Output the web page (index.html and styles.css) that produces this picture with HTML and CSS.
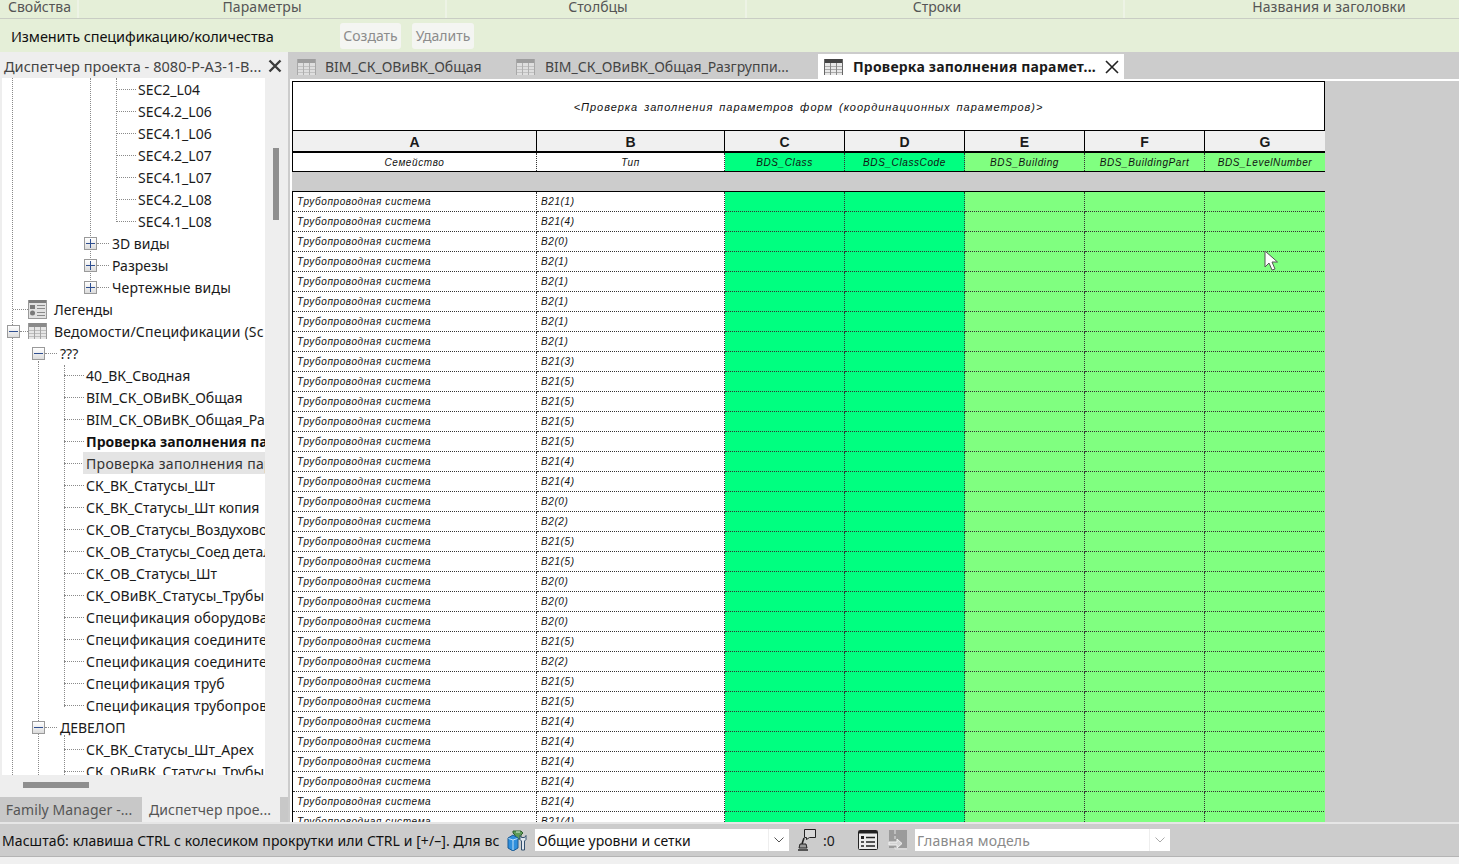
FILE: index.html
```html
<!DOCTYPE html>
<html lang="ru">
<head>
<meta charset="utf-8">
<title>Проверка заполнения параметров</title>
<link rel="stylesheet" href="styles.css">
</head>
<body>
<svg class="defs" width="0" height="0" aria-hidden="true">
  <symbol id="tbl" viewBox="0 0 19 16">
    <rect x="0" y="0" width="19" height="16" fill="#e6e6e6"/>
    <rect x="0" y="0" width="19" height="4" fill="#8a8a8a"/>
    <path d="M0 7.5h19M0 10.5h19M0 13.5h19" stroke="#bdbdbd" fill="none"/>
    <path d="M6.5 4v12M12.5 4v12" stroke="#a4a4a4" fill="none"/>
    <path d="M0.5 0v16M18.5 0v16" stroke="#9a9a9a" fill="none"/>
  </symbol>
  <symbol id="legend" viewBox="0 0 19 19">
    <rect x="0" y="0" width="19" height="19" fill="#e2e2e2"/>
    <rect x="0" y="0" width="19" height="3" fill="#7d7d7d"/>
    <path d="M0.5 0v19M18.5 0v19M0 18.5h19" stroke="#999" fill="none"/>
    <rect x="2" y="5" width="5" height="4" fill="#7a7a7a"/>
    <circle cx="4.5" cy="13" r="2.5" fill="#7a7a7a"/>
    <path d="M9 5.500h8M9 8.500h8M9 12.500h8M9 15.500h8" stroke="#8a8a8a" fill="none"/>
  </symbol>
  <symbol id="tbl-dark" viewBox="0 0 19 16">
    <rect x="0" y="0" width="19" height="16" fill="#e8e8e8"/>
    <rect x="0" y="0" width="19" height="4" fill="#444"/>
    <path d="M0 7.5h19M0 10.5h19M0 13.5h19" stroke="#aaa" fill="none"/>
    <path d="M6.5 4v12M12.5 4v12" stroke="#888" fill="none"/>
    <path d="M0.5 0v16M18.5 0v16" stroke="#666" fill="none"/>
  </symbol>
</svg>

<header class="ribbon">
  <div class="ribbon-labels">
    <div class="rl rl-1">Свойства</div>
    <div class="rl rl-2">Параметры</div>
    <div class="rl rl-3">Столбцы</div>
    <div class="rl rl-4">Строки</div>
    <div class="rl rl-5">Названия и заголовки</div>
  </div>
  <div class="context">
    <div class="context-title">Изменить спецификацию/количества</div>
    <button class="ctx-btn ctx-create">Создать</button>
    <button class="ctx-btn ctx-delete">Удалить</button>
  </div>
</header>

<main class="workspace">
  <aside class="browser">
    <div class="browser-title">
      <span class="browser-name">Диспетчер проекта - 8080-Р-А3-1-В...</span>
      <svg class="close" width="14" height="14" viewBox="0 0 14 14"><path d="M1.5 1.5l11 11M12.5 1.5l-11 11" stroke="#3b3b3b" stroke-width="2.4"/></svg>
    </div>
    <div class="browser-body">
      <div class="tree">
        <i class="guide g1"></i><i class="guide g2"></i><i class="guide g3"></i><i class="guide g5"></i><i class="guide g6"></i><i class="guide g7"></i>
        <div class="node l3"><i class="conn"></i><span>SEC2_L04</span></div>
        <div class="node l3"><i class="conn"></i><span>SEC4.2_L06</span></div>
        <div class="node l3"><i class="conn"></i><span>SEC4.1_L06</span></div>
        <div class="node l3"><i class="conn"></i><span>SEC4.2_L07</span></div>
        <div class="node l3"><i class="conn"></i><span>SEC4.1_L07</span></div>
        <div class="node l3"><i class="conn"></i><span>SEC4.2_L08</span></div>
        <div class="node l3"><i class="conn"></i><span>SEC4.1_L08</span></div>
        <div class="node l2"><b class="box plus"></b><i class="conn short"></i><span>3D виды</span></div>
        <div class="node l2"><b class="box plus"></b><i class="conn short"></i><span>Разрезы</span></div>
        <div class="node l2"><b class="box plus"></b><i class="conn short"></i><span class="wide">Чертежные виды</span></div>
        <div class="node l0"><i class="conn lead"></i><svg class="ticon" width="19" height="19"><use href="#legend"/></svg><span>Легенды</span></div>
        <div class="node l0b"><b class="box"></b><i class="conn tiny"></i><svg class="ticon" width="19" height="16"><use href="#tbl"/></svg><span class="wide">Ведомости/Спецификации (Sc</span></div>
        <div class="node l1"><b class="box"></b><i class="conn short"></i><span>???</span></div>
        <div class="node l4"><i class="conn"></i><span>40_ВК_Сводная</span></div>
        <div class="node l4"><i class="conn"></i><span>BIM_СК_ОВиВК_Общая</span></div>
        <div class="node l4"><i class="conn"></i><span>BIM_СК_ОВиВК_Общая_Разгруппировка</span></div>
        <div class="node l4"><i class="conn"></i><span class="strong">Проверка заполнения параметров форм</span></div>
        <div class="node l4"><i class="conn"></i><span class="sel">Проверка заполнения параметров</span></div>
        <div class="node l4"><i class="conn"></i><span>СК_ВК_Статусы_Шт</span></div>
        <div class="node l4"><i class="conn"></i><span>СК_ВК_Статусы_Шт копия</span></div>
        <div class="node l4"><i class="conn"></i><span>СК_ОВ_Статусы_Воздуховоды</span></div>
        <div class="node l4"><i class="conn"></i><span>СК_ОВ_Статусы_Соед детали</span></div>
        <div class="node l4"><i class="conn"></i><span>СК_ОВ_Статусы_Шт</span></div>
        <div class="node l4"><i class="conn"></i><span>СК_ОВиВК_Статусы_Трубы</span></div>
        <div class="node l4"><i class="conn"></i><span class="wide">Спецификация оборудования</span></div>
        <div class="node l4"><i class="conn"></i><span class="wide">Спецификация соединительных</span></div>
        <div class="node l4"><i class="conn"></i><span class="wide">Спецификация соединительных</span></div>
        <div class="node l4"><i class="conn"></i><span class="wide">Спецификация труб</span></div>
        <div class="node l4"><i class="conn"></i><span class="wide">Спецификация трубопроводов</span></div>
        <div class="node l1"><b class="box"></b><i class="conn short"></i><span>ДЕВЕЛОП</span></div>
        <div class="node l4"><i class="conn"></i><span>СК_ВК_Статусы_Шт_Apex</span></div>
        <div class="node l4"><i class="conn"></i><span>СК_ОВиВК_Статусы_Трубы</span></div>
      </div>
      <div class="vscroll"><div class="vthumb"></div></div>
    </div>
    <div class="hscroll"><div class="hthumb"></div></div>
    <div class="panel-tabs">
      <div class="ptab ptab-a">Family Manager -...</div>
      <div class="ptab ptab-b">Диспетчер прое...</div>
    </div>
  </aside>

  <section class="views">
    <nav class="tabs">
      <div class="tab tab-1"><svg class="dim" width="19" height="16"><use href="#tbl"/></svg><span>BIM_СК_ОВиВК_Общая</span></div>
      <div class="tab tab-2"><svg class="dim" width="19" height="16"><use href="#tbl"/></svg><span>BIM_СК_ОВиВК_Общая_Разгруппи...</span></div>
      <div class="tab tab-3"><svg width="19" height="16"><use href="#tbl-dark"/></svg><span>Проверка заполнения парамет...</span>
        <svg class="close" width="14" height="14" viewBox="0 0 14 14"><path d="M1 1l12 12M13 1L1 13" stroke="#222" stroke-width="1.6"/></svg>
      </div>
    </nav>
    <div class="sheet-wrap">
      <div class="sheet">
        <div class="s-title">&lt;Проверка заполнения параметров форм (координационных параметров)&gt;</div>
        <div class="s-row s-letters">
          <div>A</div><div>B</div><div>C</div><div>D</div><div>E</div><div>F</div><div>G</div>
        </div>
        <div class="s-row s-head">
          <div>Семейство</div><div>Тип</div><div class="c-a">BDS_Class</div><div class="c-a">BDS_ClassCode</div><div class="c-b">BDS_Building</div><div class="c-b">BDS_BuildingPart</div><div class="c-b">BDS_LevelNumber</div>
        </div>
        <div class="s-gap"></div>
        <div class="s-body">
          <div class="s-row s-data"><div>Трубопроводная система</div><div>В21(1)</div><div class="c-a"></div><div class="c-a"></div><div class="c-b"></div><div class="c-b"></div><div class="c-b"></div></div>
          <div class="s-row s-data"><div>Трубопроводная система</div><div>В21(4)</div><div class="c-a"></div><div class="c-a"></div><div class="c-b"></div><div class="c-b"></div><div class="c-b"></div></div>
          <div class="s-row s-data"><div>Трубопроводная система</div><div>В2(0)</div><div class="c-a"></div><div class="c-a"></div><div class="c-b"></div><div class="c-b"></div><div class="c-b"></div></div>
          <div class="s-row s-data"><div>Трубопроводная система</div><div>В2(1)</div><div class="c-a"></div><div class="c-a"></div><div class="c-b"></div><div class="c-b"></div><div class="c-b"></div></div>
          <div class="s-row s-data"><div>Трубопроводная система</div><div>В2(1)</div><div class="c-a"></div><div class="c-a"></div><div class="c-b"></div><div class="c-b"></div><div class="c-b"></div></div>
          <div class="s-row s-data"><div>Трубопроводная система</div><div>В2(1)</div><div class="c-a"></div><div class="c-a"></div><div class="c-b"></div><div class="c-b"></div><div class="c-b"></div></div>
          <div class="s-row s-data"><div>Трубопроводная система</div><div>В2(1)</div><div class="c-a"></div><div class="c-a"></div><div class="c-b"></div><div class="c-b"></div><div class="c-b"></div></div>
          <div class="s-row s-data"><div>Трубопроводная система</div><div>В2(1)</div><div class="c-a"></div><div class="c-a"></div><div class="c-b"></div><div class="c-b"></div><div class="c-b"></div></div>
          <div class="s-row s-data"><div>Трубопроводная система</div><div>В21(3)</div><div class="c-a"></div><div class="c-a"></div><div class="c-b"></div><div class="c-b"></div><div class="c-b"></div></div>
          <div class="s-row s-data"><div>Трубопроводная система</div><div>В21(5)</div><div class="c-a"></div><div class="c-a"></div><div class="c-b"></div><div class="c-b"></div><div class="c-b"></div></div>
          <div class="s-row s-data"><div>Трубопроводная система</div><div>В21(5)</div><div class="c-a"></div><div class="c-a"></div><div class="c-b"></div><div class="c-b"></div><div class="c-b"></div></div>
          <div class="s-row s-data"><div>Трубопроводная система</div><div>В21(5)</div><div class="c-a"></div><div class="c-a"></div><div class="c-b"></div><div class="c-b"></div><div class="c-b"></div></div>
          <div class="s-row s-data"><div>Трубопроводная система</div><div>В21(5)</div><div class="c-a"></div><div class="c-a"></div><div class="c-b"></div><div class="c-b"></div><div class="c-b"></div></div>
          <div class="s-row s-data"><div>Трубопроводная система</div><div>В21(4)</div><div class="c-a"></div><div class="c-a"></div><div class="c-b"></div><div class="c-b"></div><div class="c-b"></div></div>
          <div class="s-row s-data"><div>Трубопроводная система</div><div>В21(4)</div><div class="c-a"></div><div class="c-a"></div><div class="c-b"></div><div class="c-b"></div><div class="c-b"></div></div>
          <div class="s-row s-data"><div>Трубопроводная система</div><div>В2(0)</div><div class="c-a"></div><div class="c-a"></div><div class="c-b"></div><div class="c-b"></div><div class="c-b"></div></div>
          <div class="s-row s-data"><div>Трубопроводная система</div><div>В2(2)</div><div class="c-a"></div><div class="c-a"></div><div class="c-b"></div><div class="c-b"></div><div class="c-b"></div></div>
          <div class="s-row s-data"><div>Трубопроводная система</div><div>В21(5)</div><div class="c-a"></div><div class="c-a"></div><div class="c-b"></div><div class="c-b"></div><div class="c-b"></div></div>
          <div class="s-row s-data"><div>Трубопроводная система</div><div>В21(5)</div><div class="c-a"></div><div class="c-a"></div><div class="c-b"></div><div class="c-b"></div><div class="c-b"></div></div>
          <div class="s-row s-data"><div>Трубопроводная система</div><div>В2(0)</div><div class="c-a"></div><div class="c-a"></div><div class="c-b"></div><div class="c-b"></div><div class="c-b"></div></div>
          <div class="s-row s-data"><div>Трубопроводная система</div><div>В2(0)</div><div class="c-a"></div><div class="c-a"></div><div class="c-b"></div><div class="c-b"></div><div class="c-b"></div></div>
          <div class="s-row s-data"><div>Трубопроводная система</div><div>В2(0)</div><div class="c-a"></div><div class="c-a"></div><div class="c-b"></div><div class="c-b"></div><div class="c-b"></div></div>
          <div class="s-row s-data"><div>Трубопроводная система</div><div>В21(5)</div><div class="c-a"></div><div class="c-a"></div><div class="c-b"></div><div class="c-b"></div><div class="c-b"></div></div>
          <div class="s-row s-data"><div>Трубопроводная система</div><div>В2(2)</div><div class="c-a"></div><div class="c-a"></div><div class="c-b"></div><div class="c-b"></div><div class="c-b"></div></div>
          <div class="s-row s-data"><div>Трубопроводная система</div><div>В21(5)</div><div class="c-a"></div><div class="c-a"></div><div class="c-b"></div><div class="c-b"></div><div class="c-b"></div></div>
          <div class="s-row s-data"><div>Трубопроводная система</div><div>В21(5)</div><div class="c-a"></div><div class="c-a"></div><div class="c-b"></div><div class="c-b"></div><div class="c-b"></div></div>
          <div class="s-row s-data"><div>Трубопроводная система</div><div>В21(4)</div><div class="c-a"></div><div class="c-a"></div><div class="c-b"></div><div class="c-b"></div><div class="c-b"></div></div>
          <div class="s-row s-data"><div>Трубопроводная система</div><div>В21(4)</div><div class="c-a"></div><div class="c-a"></div><div class="c-b"></div><div class="c-b"></div><div class="c-b"></div></div>
          <div class="s-row s-data"><div>Трубопроводная система</div><div>В21(4)</div><div class="c-a"></div><div class="c-a"></div><div class="c-b"></div><div class="c-b"></div><div class="c-b"></div></div>
          <div class="s-row s-data"><div>Трубопроводная система</div><div>В21(4)</div><div class="c-a"></div><div class="c-a"></div><div class="c-b"></div><div class="c-b"></div><div class="c-b"></div></div>
          <div class="s-row s-data"><div>Трубопроводная система</div><div>В21(4)</div><div class="c-a"></div><div class="c-a"></div><div class="c-b"></div><div class="c-b"></div><div class="c-b"></div></div>
          <div class="s-row s-data"><div>Трубопроводная система</div><div>В21(4)</div><div class="c-a"></div><div class="c-a"></div><div class="c-b"></div><div class="c-b"></div><div class="c-b"></div></div>
        </div>
      </div>
      <svg class="cursor" width="14" height="21" viewBox="0 0 14 21"><path d="M1 1v16l4-4 3 7 3-1-3-7h5.5z" fill="#fff" stroke="#555" stroke-width="1"/></svg>
    </div>
  </section>
</main>

<footer class="status">
  <div class="status-bar">
    <div class="hint">Масштаб: клавиша CTRL с колесиком прокрутки или CTRL и [+/–]. Для вс</div>
    <svg class="st-ws" width="21" height="22" viewBox="0 0 21 22">
      <path d="M6 2h8l2 2-2 2v4H8V6L6 4z" fill="#5d9a57" stroke="#2f5f2d"/>
      <path d="M9 3h4" stroke="#dcefd8"/>
      <path d="M1 9l5-3 5 3v10l-5 3-5-3z" fill="#2f8fdc" stroke="#1a5a94"/>
      <path d="M6 11v10M1.5 9.5L6 11l4.5-1.5" stroke="#bfe0f8" fill="none"/>
      <path d="M13 6.5v4l1.5 1.5V21h3v-9l1.5-1.5v-4l-1.5 2h-3z" fill="#dfe6ee" stroke="#33506e"/>
    </svg>
    <div class="combo combo-1"><span class="combo-text">Общие уровни и сетки</span><span class="combo-arrow"><svg width="10" height="6" viewBox="0 0 10 6"><path d="M0.5 0.5L5 5l4.5-4.5" fill="none" stroke="#555"/></svg></span></div>
    <svg class="st-sel" width="18" height="22" viewBox="0 0 18 22">
      <path d="M6.5 0.5h11v8h-6l-3 2v-2h-2z" fill="#d8d8d8" stroke="#222"/>
      <path d="M6 9L4 15" stroke="#222" stroke-width="1.6"/>
      <path d="M2 15h6l1 4H1z" fill="#999" stroke="#222"/>
      <path d="M0 21h10" stroke="#222" stroke-width="1.4"/>
    </svg>
    <span class="st-zero">:0</span>
    <svg class="st-list" width="20" height="20" viewBox="0 0 20 20">
      <rect x="0.5" y="0.5" width="19" height="19" rx="1" fill="#ececec" stroke="#222"/>
      <rect x="1" y="1" width="18" height="2.5" fill="#222"/>
      <rect x="3" y="6" width="3" height="3" fill="#222"/>
      <path d="M8 7.5h9M3 12h3M8 12h9M3 16h3M8 16h9" stroke="#222" stroke-width="1.4"/>
    </svg>
    <svg class="st-edit" width="20" height="20" viewBox="0 0 20 20">
      <rect x="1" y="0" width="18" height="18" fill="#9b9b9b"/>
      <path d="M7 0v4M7 6v3M19 19H7v-2" fill="none" stroke="#e4e4e4"/>
      <path d="M1 12h8V9l5 4.500-5 4.500v-3H1z" fill="#d4d4d4" stroke="#f2f2f2"/>
    </svg>
    <div class="combo combo-2"><span class="combo-text">Главная модель</span><span class="combo-arrow"><svg width="10" height="6" viewBox="0 0 10 6"><path d="M0.5 0.5L5 5l4.5-4.5" fill="none" stroke="#aaa"/></svg></span></div>
  </div>
  <div class="status-foot"></div>
</footer>
</body>
</html>
```
FILE: styles.css
```css
* { box-sizing: border-box; }
html, body { margin: 0; padding: 0; }
body {
  width: 1459px;
  height: 864px;
  overflow: hidden;
  background: #cccccc;
  font-family: "Noto Sans", "Open Sans", sans-serif;
  font-size: 14px;
  color: #1a1a1a;
  display: flex;
  flex-direction: column;
}
.defs { position: absolute; }

/* Ribbon */
.ribbon { flex: 0 0 52px; background: #e5efd8; display: flex; flex-direction: column; }
.ribbon-labels {
  flex: 0 0 19px;
  display: flex;
  border-bottom: 1px solid #c9cdc4;
  color: #555;
  line-height: 14px;
  overflow: hidden;
}
.rl { border-right: 2px solid #edf3e5; text-align: center; overflow: hidden; }
.rl-1 { flex: 0 0 79px; text-align: left; padding-left: 8px; }
.rl-2 { flex: 0 0 368px; letter-spacing: 0.1px; }
.rl-3 { flex: 0 0 300px; padding-left: 4px; }
.rl-4 { flex: 0 0 378px; padding-left: 4px; }
.rl-5 { flex: 1; border-right: 0; padding-left: 74px; letter-spacing: 0.1px; }

.context { flex: 1; display: flex; align-items: center; padding-left: 11px; }
.context-title { width: 329px; color: #111; letter-spacing: -0.09px; font-size: 14.5px; }
.ctx-btn {
  height: 26px;
  border: 0;
  border-radius: 3px;
  background: #f4f5f2;
  color: #8c8c8c;
  font: inherit;
  padding: 0;
}
.ctx-create { width: 61px; margin-right: 11px; }
.ctx-delete { width: 62px; }

/* Workspace */
.workspace { flex: 0 0 770px; display: flex; overflow: hidden; }

.browser { flex: 0 0 288px; display: flex; flex-direction: column; background: #eeeeee; padding-top: 2px; }
.browser-title { flex: 0 0 24px; display: flex; align-items: center; justify-content: space-between; padding: 0 6px 0 4px; color: #444; }
.browser-name { font-size: 14.5px; letter-spacing: 0.05px; }
.browser-body { flex: 0 0 697px; display: flex; overflow: hidden; padding-left: 2px; }
.tree { position: relative; flex: 0 0 263px; background: #fff; overflow: hidden; }
.node {
  height: 22px;
  display: flex;
  align-items: center;
  white-space: nowrap;
  position: relative;
  color: #1a1a1a;
}
.node span { position: relative; }
.wide { letter-spacing: 0.2px; }
.conn { display: block; flex: 0 0 auto; width: 20px; border-top: 1px dotted #8a8a8a; margin-right: 2px; }
.conn.short { width: 12px; margin-right: 3px; }
.conn.tiny { width: 8px; margin-right: 0; }
.conn.lead { width: 15px; margin-right: 0; }
.l3 { padding-left: 114px; }
.l4 { padding-left: 62px; }
.l2 { padding-left: 82px; }
.l0 { padding-left: 11px; }
.l0b { padding-left: 5px; }
.l1 { padding-left: 30px; }
.ticon { margin-right: 7px; flex: 0 0 auto; }
.strong { font-weight: 700; color: #111; }
.sel {
  background: #e4e4e4;
  margin-left: -3px;
  padding-left: 3px;
  height: 22px;
  line-height: 23px;
  width: 200px;
  letter-spacing: 0.32px;
  color: #333;
  overflow: hidden;
}
.box {
  display: block;
  flex: 0 0 auto;
  position: relative;
  width: 13px;
  height: 13px;
  border: 1px solid #9a9a9a;
  background: linear-gradient(#ffffff, #dcdcdc);
}
.box::before {
  content: "";
  position: absolute;
  left: 1px; right: 1px; top: 5px;
  height: 1px;
  background: #2f4f90;
}
.box.plus::after {
  content: "";
  position: absolute;
  top: 1px; bottom: 1px; left: 5px;
  width: 1px;
  background: #2f4f90;
}
.guide { position: absolute; width: 0; border-left: 1px dotted #8a8a8a; }
.g1 { left: 10px; top: 0; bottom: 0; }
.g2 { left: 88px; top: 0; height: 210px; }
.g3 { left: 114px; top: 0; height: 144px; }
.g5 { left: 36px; top: 283px; bottom: 0; }
.g6 { left: 62px; top: 287px; height: 342px; }
.g7 { left: 62px; top: 657px; bottom: 0; }
.vscroll { flex: 0 0 23px; position: relative; background: #eee; }
.vthumb { position: absolute; left: 8px; top: 70px; width: 6px; height: 72px; background: #8f8f8f; }
.hscroll { flex: 0 0 22px; position: relative; }
.hthumb { position: absolute; left: 23px; top: 7px; width: 66px; height: 6px; background: #8f8f8f; }
.panel-tabs { flex: 1; display: flex; background: #c8c8c8; color: #555; }
.ptab { padding-top: 3px; text-align: center; white-space: nowrap; letter-spacing: 0.08px; }
.ptab-a { flex: 0 0 142px; padding-right: 4px; }
.ptab-b { flex: 0 0 138px; background: #eeeeee; color: #555; padding-right: 2px; }

/* Views */
.views { flex: 1; display: flex; flex-direction: column; min-width: 0; }
.tabs { flex: 0 0 27px; display: flex; padding-top: 2px; background: #cccccc; color: #444; }
.tab { display: flex; align-items: center; height: 25px; white-space: nowrap; }
.tab svg { flex: 0 0 auto; }
.tab svg.dim { opacity: 0.7; }
.tab-1 { flex: 0 0 220px; padding-left: 9px; }
.tab-1 span { margin-left: 9px; }
.tab-2 { flex: 0 0 310px; padding-left: 8px; }
.tab-2 span { margin-left: 10px; }
.tab-3 { flex: 0 0 306px; padding-left: 6px; background: #fff; color: #1a1a1a; font-weight: 700; letter-spacing: 0.2px; }
.tab-3 span { margin-left: 10px; margin-right: 9px; }

.sheet-wrap {
  flex: 1;
  position: relative;
  display: flex;
  margin-left: 2px;
  padding: 2px 0 0 0;
  border-left: 2px solid #fff;
  background: linear-gradient(#fff 2px, #cccccc 2px);
  overflow: hidden;
}
.sheet { position: relative; width: 1033px; background: #fff; display: flex; flex-direction: column; height: 741px; overflow: hidden; }

.s-title, .s-head, .s-data {
  font-family: "Liberation Sans", "DejaVu Sans", sans-serif;
  font-style: italic;
  color: #111;
}
.s-title {
  flex: 0 0 50px;
  min-height: 0;
  overflow: hidden;
  border: 1px solid #000;
  text-align: center;
  line-height: 50px;
  font-size: 11px;
  letter-spacing: 0.98px;
  word-spacing: 2px;
}
.s-row { display: grid; grid-template-columns: 244px 188px 120px 120px 120px 120px 121px; }
.s-letters { flex: 0 0 22px; min-height: 0; background: #f0f0f0; border-bottom: 2px solid #000; border-left: 1px solid #000; font-family: "Liberation Sans", sans-serif; font-size: 14px; font-weight: 700; }
.s-letters > div { height: 20px; padding-top: 1px; overflow: hidden; text-align: center; line-height: 20px; border-right: 1px solid #000; }
.s-head { flex: 0 0 19px; min-height: 0; border-bottom: 1px solid #000; border-left: 1px solid #000; font-size: 10px; letter-spacing: 0.6px; }
.s-head > div { height: 18px; padding-top: 1px; text-align: center; line-height: 18px; border-right: 1px dotted #333; white-space: nowrap; overflow: hidden; }
.s-head > div:last-child, .s-data > div:last-child { border-right: 1px solid #000; }
.s-gap { flex: 0 0 20px; background: #cccccc; border-bottom: 1px solid #000; }
.s-body { flex: 1; min-height: 0; border-left: 1px solid #000; overflow: hidden; }
.s-data { height: 20px; font-size: 10px; letter-spacing: 0.6px; }
.s-data > div { height: 20px; padding-top: 1px; line-height: 18px; padding-left: 4px; border-right: 1px dotted #333; border-bottom: 1px dotted #333; white-space: nowrap; overflow: hidden; }
.c-a { background: #00ff80; }
.c-b { background: #80ff80; }
.cursor { position: absolute; left: 972px; top: 171px; }

/* Status */
.status { flex: 0 0 42px; display: flex; flex-direction: column; }
.status-bar {
  flex: 0 0 35px;
  display: flex;
  align-items: center;
  background: #cccccc;
  border-top: 2px solid #e6e6e6;
  border-bottom: 1px solid #b4b4b4;
  position: relative;
  padding-left: 2px;
  white-space: nowrap;
}
.hint { flex: 0 0 498px; overflow: hidden; color: #111; letter-spacing: 0.08px; }
.st-ws { margin: 0 0 0 7px; }
.combo { height: 22px; display: flex; background: #fff; align-items: center; }
.combo-text { flex: 1; padding-left: 2px; }
.combo-arrow { flex: 0 0 21px; height: 22px; display: flex; align-items: center; justify-content: center; border-left: 1px solid #eee; }
.combo-1 { flex: 0 0 254px; margin-left: 7px; color: #111; }
.combo-2 { flex: 0 0 255px; margin-left: 7px; color: #8a8a8a; letter-spacing: 0.25px; }
.st-sel { margin-left: 9px; }
.st-zero { margin-left: 7px; width: 35px; }
.st-edit { margin-left: 10px; }
.status-foot { flex: 1; background: #f0f0f0; }
```
